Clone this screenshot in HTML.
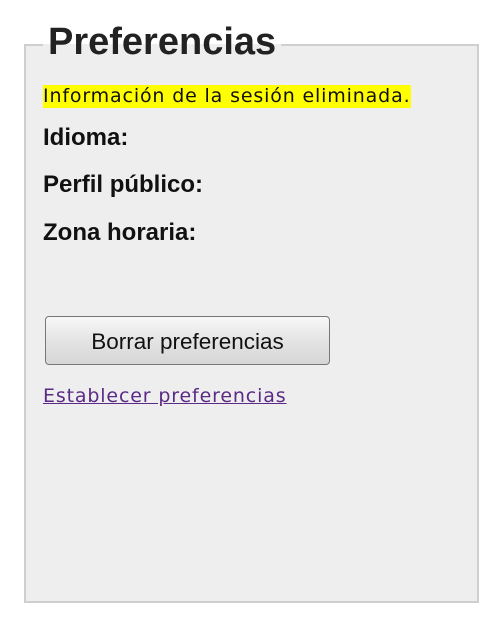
<!DOCTYPE html>
<html><head><style>
html,body{margin:0;padding:0;background:#fff;width:500px;height:626px;overflow:hidden}
.box{position:absolute;left:24px;top:44px;width:451px;height:555px;background:#eeeeee;border:2px solid #cfcfcf}
.leg{position:absolute;left:43px;top:20px;padding:0 5px;background:linear-gradient(#fff 0,#fff 24px,#eeeeee 24px);font:bold 38px "Liberation Sans",sans-serif;color:#222;line-height:44px}
.hl{position:absolute;left:43px;top:85px;height:23px;background:#ffff00;font:19px "DejaVu Sans",sans-serif;letter-spacing:0.85px;line-height:23px;color:#111;white-space:nowrap;padding-right:1px}
.lbl{position:absolute;left:43px;font:bold 24px "Liberation Sans",sans-serif;color:#111}
.btn{position:absolute;left:45px;top:316px;width:285px;height:49px;border:1px solid #777;border-radius:4px;background:linear-gradient(#f8f8f8,#e4e4e4 50%,#d6d6d6);font:22.5px "Liberation Sans",sans-serif;color:#111;text-align:center;line-height:49px;box-sizing:border-box}
.lnk{position:absolute;left:43px;top:385px;font:19px "DejaVu Sans",sans-serif;letter-spacing:0.85px;color:#5a2a86;text-decoration:underline;white-space:nowrap}
</style></head><body>
<div class="box"></div>
<div class="leg">Preferencias</div>
<div class="hl">Información de la sesión eliminada.</div>
<div class="lbl" style="top:124px">Idioma:</div>
<div class="lbl" style="top:171px">Perfil público:</div>
<div class="lbl" style="top:219px">Zona horaria:</div>
<div class="btn">Borrar preferencias</div>
<div class="lnk">Establecer preferencias</div>
</body></html>
